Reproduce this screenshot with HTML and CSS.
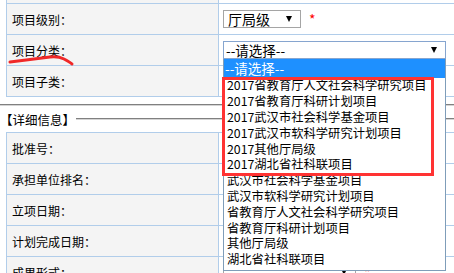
FILE: index.html
```html
<!DOCTYPE html>
<html lang="zh-CN">
<head>
    <meta charset="UTF-8">
    <meta name="viewport" content="width=device-width, initial-scale=1.0">
    <title>项目信息</title>
    <link rel="stylesheet" href="styles.css">
</head>
<body>
    <table class="form-table">
        <tr class="cut"><td class="label"></td><td class="value"></td></tr>
        <tr>
            <td class="label">项目级别：</td>
            <td class="value">
                <span class="select select-level">厅局级</span><span class="req">*</span>
            </td>
        </tr>
        <tr>
            <td class="label">项目分类：</td>
            <td class="value">
                <span class="select select-type">--请选择--
                    <ul class="options">
                        <li class="active">--请选择--</li>
                        <li>2017省教育厅人文社会科学研究项目</li>
                        <li>2017省教育厅科研计划项目</li>
                        <li>2017武汉市社会科学基金项目</li>
                        <li>2017武汉市软科学研究计划项目</li>
                        <li>2017其他厅局级</li>
                        <li>2017湖北省社科联项目</li>
                        <li>武汉市社会科学基金项目</li>
                        <li>武汉市软科学研究计划项目</li>
                        <li>省教育厅人文社会科学研究项目</li>
                        <li>省教育厅科研计划项目</li>
                        <li>其他厅局级</li>
                        <li>湖北省社科联项目</li>
                        <div class="mark-box"></div>
                    </ul>
                </span><span class="req">*</span>
            </td>
        </tr>
        <tr>
            <td class="label">项目子类：</td>
            <td class="value"></td>
        </tr>
    </table>

    <hr class="divider">
    <div class="section-title">【详细信息】</div>

    <table class="form-table detail-table">
        <tr><td class="label">批准号：</td><td class="value"></td></tr>
        <tr><td class="label">承担单位排名：</td><td class="value"></td></tr>
        <tr><td class="label">立项日期：</td><td class="value"></td></tr>
        <tr><td class="label">计划完成日期：</td><td class="value"></td></tr>
        <tr>
            <td class="label">成果形式：</td>
            <td class="value"><span class="select select-result"></span><span class="req">*</span></td>
        </tr>
    </table>

    <!-- hand-drawn underline from the screenshot -->
    <svg class="mark-line" width="70" height="14" viewBox="0 0 70 14">
        <path d="M2 8 Q 22 5.5, 42 3 Q 50 2, 56 5 T 64 10" fill="none" stroke="#f02828" stroke-width="3" stroke-linecap="round"/>
    </svg>
</body>
</html>
```

FILE: styles.css
```css
* {
    box-sizing: border-box;
    margin: 0;
    padding: 0;
}

html, body {
    overflow: hidden;
}

body {
    font-family: "Noto Sans CJK SC", sans-serif;
    font-size: 12px;
    color: #000;
    background-color: #fff;
}

.form-table {
    border-spacing: 0;
    border-left: 1px solid #b1cdea;
    margin-left: 6px;
    width: 520px;
}

.form-table td {
    height: 31px;
    border-right: 1px solid #b1cdea;
    border-bottom: 1px solid #b1cdea;
    vertical-align: middle;
}

.form-table .cut td {
    height: 4px;
}

.form-table .label {
    width: 212px;
    padding-left: 5px;
    background-color: #f4f4f4;
}

.form-table .value {
    padding-left: 4px;
    background-color: #fff;
}

.select {
    position: relative;
    display: inline-block;
    vertical-align: middle;
    height: 18px;
    padding-left: 4px;
    border: 1px solid #a5a5a5;
    background-color: #fff;
    font-size: 14px;
    line-height: 16px;
}

.select::after {
    content: '';
    position: absolute;
    right: 8px;
    top: 5px;
    border-left: 3.5px solid transparent;
    border-right: 3.5px solid transparent;
    border-top: 6px solid #000;
}

.select-level {
    width: 78px;
}

.select-type {
    width: 223px;
    padding-left: 2px;
    font-size: 13.5px;
    border-color: #86a5cf;
}

.select-result {
    width: 133px;
}

.req {
    color: #f00;
    margin-left: 8px;
    vertical-align: middle;
    font-size: 14px;
}

.options {
    position: absolute;
    left: -1px;
    top: 17px;
    width: 223px;
    z-index: 2;
    list-style: none;
    border: 1px solid #7f9db9;
    border-top: none;
    padding-bottom: 2px;
    background-color: #fff;
    font-size: 12.3px;
    color: #000;
}

.options li {
    height: 15.8px;
    line-height: 15.8px;
    padding-left: 3px;
    white-space: nowrap;
}

.options li.active {
    height: 19px;
    line-height: 19px;
    padding-left: 1px;
    font-size: 13.5px;
    background-color: #1e90ff;
    color: #fff;
}

.mark-box {
    position: absolute;
    left: -2px;
    top: 18px;
    width: 212px;
    height: 99px;
    border: 3px solid #f33;
}

.divider {
    border: none;
    border-top: 1px solid #808080;
    border-bottom: 1px solid #d4d4d4;
    margin-top: 7px;
}

.section-title {
    display: flex;
    align-items: center;
    height: 26px;
    font-size: 12.5px;
}

.section-title::after {
    content: '';
    flex: 1;
    margin-left: 1px;
    border-top: 1px solid #808080;
    border-bottom: 1px solid #d4d4d4;
}

.detail-table {
    border-top: 1px solid #b1cdea;
}

.mark-line {
    position: absolute;
    left: 8px;
    top: 54px;
}
```
